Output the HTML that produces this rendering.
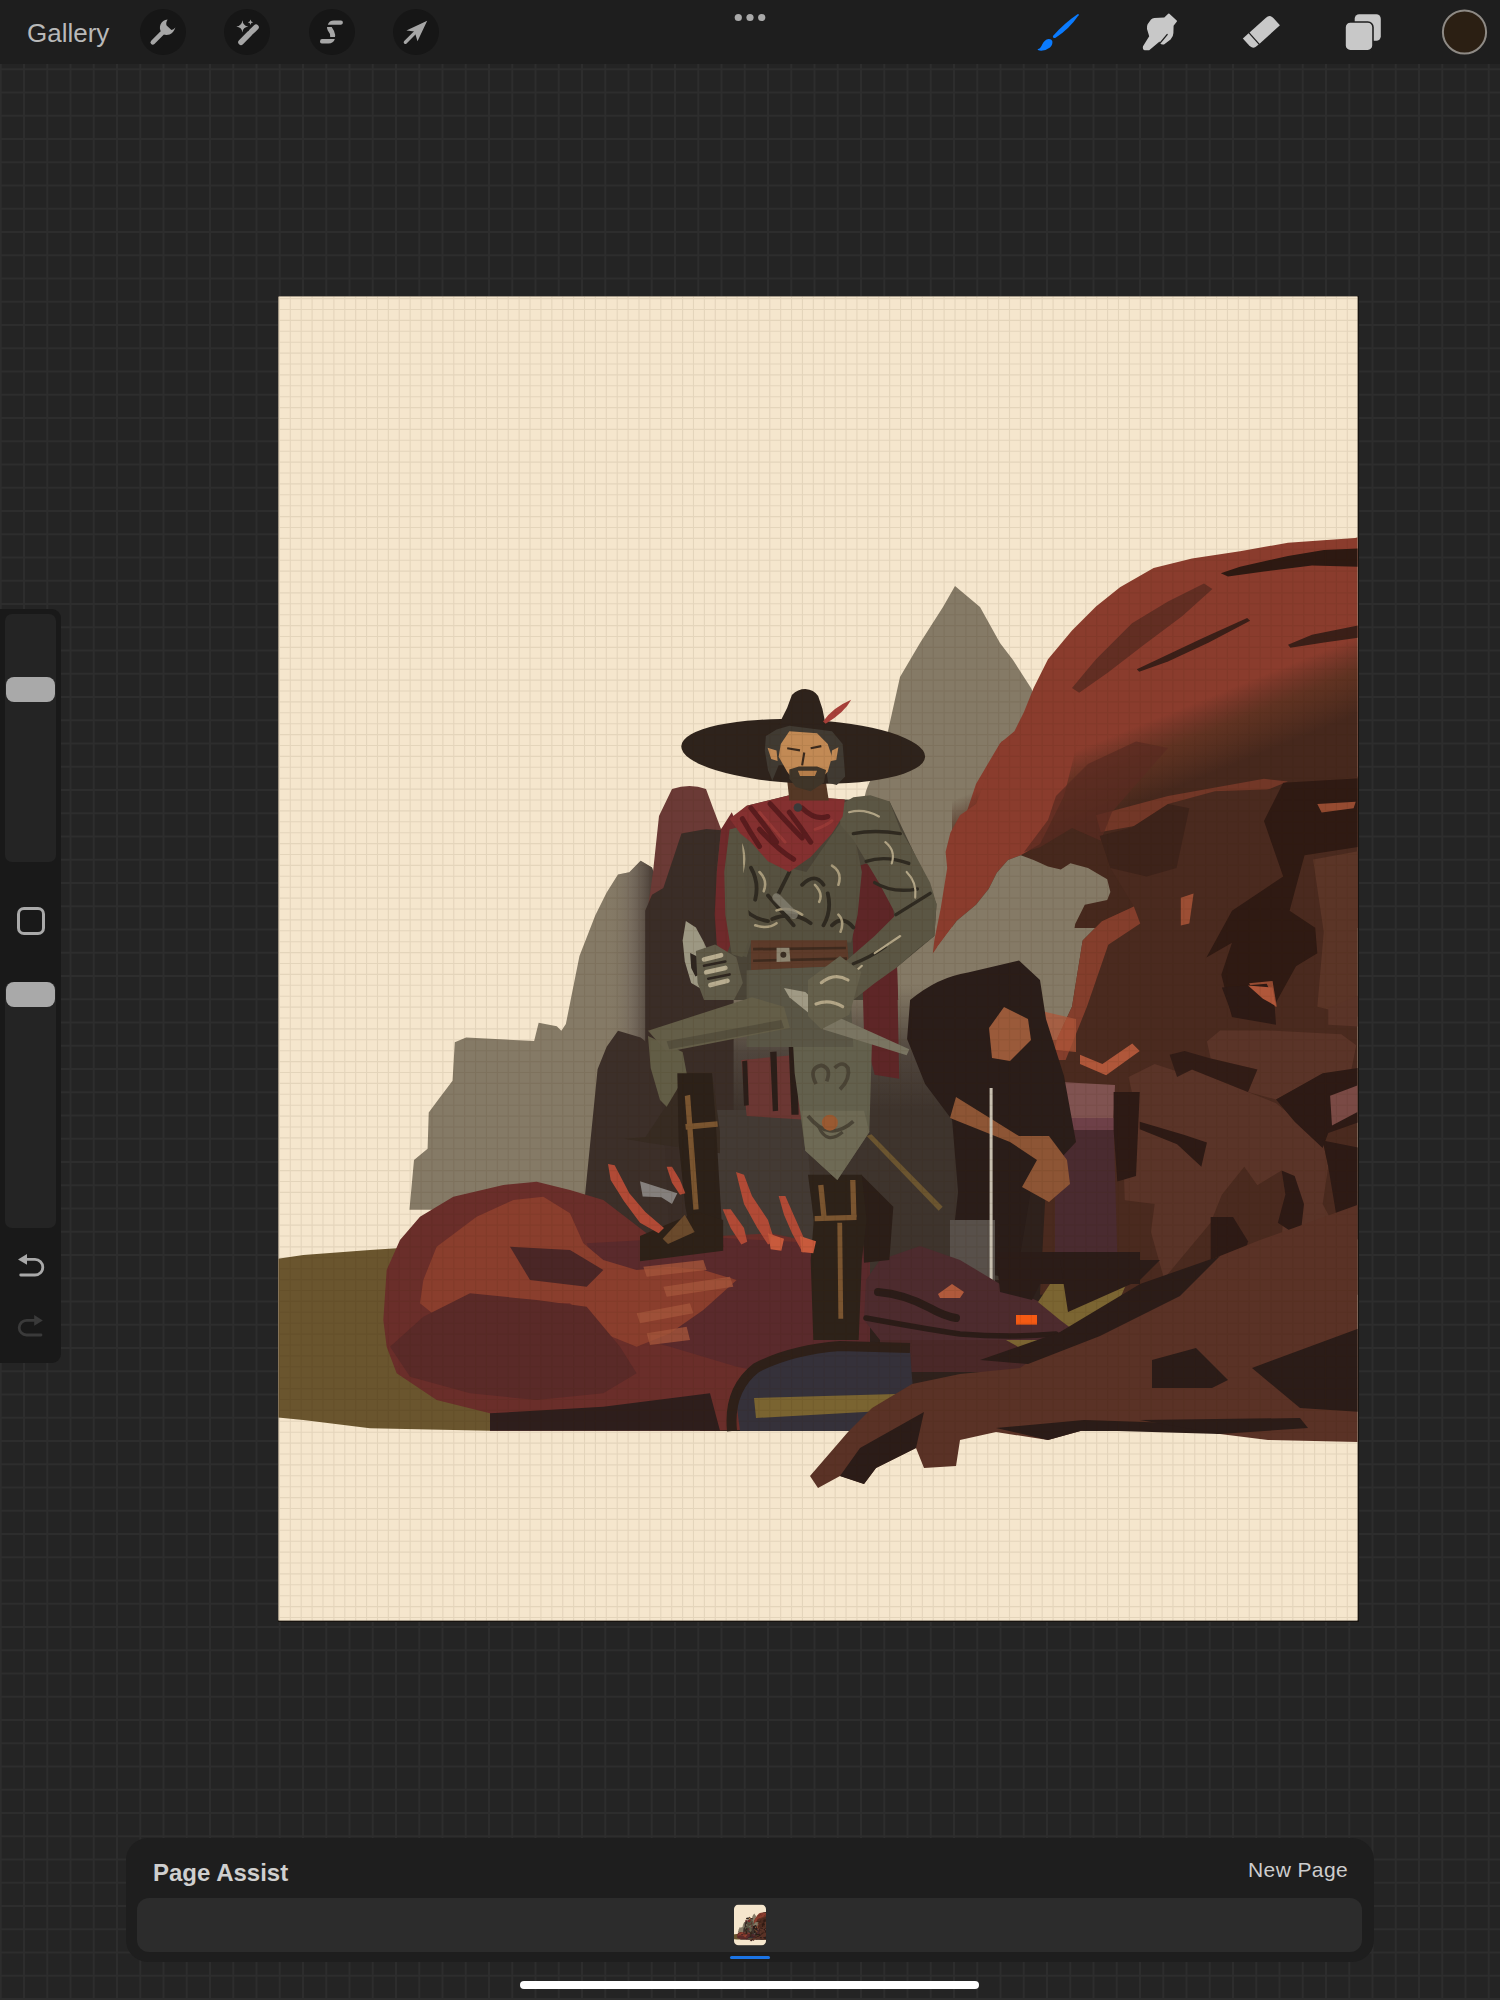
<!DOCTYPE html>
<html><head><meta charset="utf-8">
<style>
html,body{margin:0;padding:0;width:1500px;height:2000px;overflow:hidden;background:#242424;font-family:"Liberation Sans",sans-serif;}
.abs{position:absolute;}
#topbar{left:0;top:0;width:1500px;height:64px;background:#1e1e1e;}
#gallery{left:27px;top:17.5px;font-size:26px;color:#b9b9b9;line-height:30px;}
.circ{width:46px;height:46px;border-radius:50%;background:#161616;top:9px;}
#sidebar{left:0;top:609px;width:61px;height:754px;background:#191919;border-radius:0 9px 9px 0;}
.track{left:5px;width:51px;background:#242424;border-radius:7px;}
.thumb{left:6px;width:49px;height:25px;background:#a9a9a9;border-radius:8px;}
#panel{left:126px;top:1838px;width:1248px;height:124px;background:#1e1e1e;border-radius:22px;}
#strip{left:137px;top:1898px;width:1225px;height:54px;background:#2c2c2c;border-radius:12px;}
#pa{left:153px;top:1859px;font-size:24px;font-weight:bold;color:#cfcfcf;line-height:28px;}
#np{left:1248px;top:1858px;font-size:21px;color:#cdcdcd;line-height:24px;letter-spacing:0.4px;}
#home{left:520px;top:1981px;width:459px;height:8px;background:#fff;border-radius:4px;}
#uline{left:730px;top:1956px;width:40px;height:3px;background:#1b74e4;border-radius:1.5px;}
</style></head>
<body>
<svg class="abs" style="left:0;top:0" width="1500" height="2000" id="bggrid"><path d="M0.75 0V2000M24.00 0V2000M47.25 0V2000M70.50 0V2000M93.75 0V2000M117.00 0V2000M140.25 0V2000M163.50 0V2000M186.75 0V2000M210.00 0V2000M233.25 0V2000M256.50 0V2000M279.75 0V2000M303.00 0V2000M326.25 0V2000M349.50 0V2000M372.75 0V2000M396.00 0V2000M419.25 0V2000M442.50 0V2000M465.75 0V2000M489.00 0V2000M512.25 0V2000M535.50 0V2000M558.75 0V2000M582.00 0V2000M605.25 0V2000M628.50 0V2000M651.75 0V2000M675.00 0V2000M698.25 0V2000M721.50 0V2000M744.75 0V2000M768.00 0V2000M791.25 0V2000M814.50 0V2000M837.75 0V2000M861.00 0V2000M884.25 0V2000M907.50 0V2000M930.75 0V2000M954.00 0V2000M977.25 0V2000M1000.50 0V2000M1023.75 0V2000M1047.00 0V2000M1070.25 0V2000M1093.50 0V2000M1116.75 0V2000M1140.00 0V2000M1163.25 0V2000M1186.50 0V2000M1209.75 0V2000M1233.00 0V2000M1256.25 0V2000M1279.50 0V2000M1302.75 0V2000M1326.00 0V2000M1349.25 0V2000M1372.50 0V2000M1395.75 0V2000M1419.00 0V2000M1442.25 0V2000M1465.50 0V2000M1488.75 0V2000M0 -0.45H1500M0 22.80H1500M0 46.05H1500M0 69.30H1500M0 92.55H1500M0 115.80H1500M0 139.05H1500M0 162.30H1500M0 185.55H1500M0 208.80H1500M0 232.05H1500M0 255.30H1500M0 278.55H1500M0 301.80H1500M0 325.05H1500M0 348.30H1500M0 371.55H1500M0 394.80H1500M0 418.05H1500M0 441.30H1500M0 464.55H1500M0 487.80H1500M0 511.05H1500M0 534.30H1500M0 557.55H1500M0 580.80H1500M0 604.05H1500M0 627.30H1500M0 650.55H1500M0 673.80H1500M0 697.05H1500M0 720.30H1500M0 743.55H1500M0 766.80H1500M0 790.05H1500M0 813.30H1500M0 836.55H1500M0 859.80H1500M0 883.05H1500M0 906.30H1500M0 929.55H1500M0 952.80H1500M0 976.05H1500M0 999.30H1500M0 1022.55H1500M0 1045.80H1500M0 1069.05H1500M0 1092.30H1500M0 1115.55H1500M0 1138.80H1500M0 1162.05H1500M0 1185.30H1500M0 1208.55H1500M0 1231.80H1500M0 1255.05H1500M0 1278.30H1500M0 1301.55H1500M0 1324.80H1500M0 1348.05H1500M0 1371.30H1500M0 1394.55H1500M0 1417.80H1500M0 1441.05H1500M0 1464.30H1500M0 1487.55H1500M0 1510.80H1500M0 1534.05H1500M0 1557.30H1500M0 1580.55H1500M0 1603.80H1500M0 1627.05H1500M0 1650.30H1500M0 1673.55H1500M0 1696.80H1500M0 1720.05H1500M0 1743.30H1500M0 1766.55H1500M0 1789.80H1500M0 1813.05H1500M0 1836.30H1500M0 1859.55H1500M0 1882.80H1500M0 1906.05H1500M0 1929.30H1500M0 1952.55H1500M0 1975.80H1500M0 1999.05H1500" stroke="#2d2d2d" stroke-width="2" fill="none"/></svg>
<div id="topbar" class="abs"></div>
<div id="gallery" class="abs">Gallery</div>
<div class="abs circ" style="left:140px"></div>
<div class="abs circ" style="left:224px"></div>
<div class="abs circ" style="left:309px"></div>
<div class="abs circ" style="left:393px"></div>
<svg class="abs" style="left:0;top:0" width="1500" height="64">
<g fill="#a6a6a6">
 <!-- wrench -->
 <g transform="translate(140 9)">
  <line x1="12.8" y1="33.4" x2="22" y2="24.2" stroke="#a6a6a6" stroke-width="4.6" stroke-linecap="round"/>
  <path d="M27.6 10.6 Q22.5 11.2 20.5 15.5 Q19 19.5 21.2 23 L23.5 25.5 Q26.5 26.3 29.5 25.5 Q33.5 24 35.4 18.6 Q33.5 20.8 31.5 20.9 L26.6 16.5 Q25.5 14.2 27.6 10.6 Z"/>
 </g>
 <!-- wand -->
 <g transform="translate(224 9)">
  <line x1="17" y1="33.2" x2="25.6" y2="24.6" stroke="#a6a6a6" stroke-width="5.6" stroke-linecap="round"/>
  <line x1="27.6" y1="22.6" x2="32" y2="18.3" stroke="#a6a6a6" stroke-width="5.6" stroke-linecap="round"/>
  <path d="M18.4 11.2 Q19 16.8 24.3 17.5 Q19 18.2 18.4 23.4 Q17.8 18.2 12.3 17.5 Q17.8 16.8 18.4 11.2 Z"/>
  <path d="M26.5 10.6 Q26.8 13 29.2 13.3 Q26.8 13.6 26.5 16 Q26.2 13.6 23.8 13.3 Q26.2 13 26.5 10.6 Z"/>
 </g>
 <!-- selection S -->
 <g transform="translate(309 9)">
  <path d="M18.8 15.7 Q20 11.6 25 11.5 L32 11.5 Q33.9 11.6 33.9 13.6 Q33.9 15.7 32 15.7 Z"/>
  <path d="M18 18.1 L22.7 18.1 Q25.8 22.5 26.2 26 L26 27.9 L21.2 27.9 Q21.5 24.5 18.8 21.5 Q17.8 19.6 18 18.1 Z"/>
  <path d="M25.8 30.1 Q24.5 34.4 19.5 34.6 L12.8 34.6 Q11 34.5 11 32.4 Q11.1 30.1 13 30.1 Z"/>
 </g>
 <!-- arrow -->
 <g transform="translate(393 9)">
  <line x1="12.4" y1="33.2" x2="22" y2="23.6" stroke="#a6a6a6" stroke-width="3.4" stroke-linecap="round"/>
  <path d="M34.2 11.8 L13.4 21.4 L21.6 22.6 L24.5 32.3 Z"/>
 </g>
</g>
<circle cx="738.3" cy="17.5" r="3.6" fill="#a9a9a9"/>
<circle cx="750" cy="17.5" r="3.6" fill="#a9a9a9"/>
<circle cx="761.7" cy="17.5" r="3.6" fill="#a9a9a9"/>
<!-- brush -->
<g transform="translate(1030 8)" fill="#0a7bff">
 <path d="M23.2 29.6 Q22.4 28.8 23.4 27.6 Q34 15.5 47.5 6.3 Q49.2 5.5 48.6 7.2 Q39.5 20.6 25.6 29.8 Q24.2 30.5 23.2 29.6 Z"/>
 <path d="M7.8 41 Q10.5 40.8 12.3 36.2 Q14.5 31.8 18.5 31 Q21.5 30.8 22.3 33 Q23 36.5 20 39.6 Q15.5 43.2 9.5 42.6 Q7 42.2 7.8 41 Z"/>
</g>
<!-- smudge -->
<g transform="translate(1132 8)">
 <path fill="#c8c8c8" d="M11 38.2 Q10.2 41.8 13 42.3 L17.2 42.3 L27.6 33.6 L28.2 35.8 Q30 37 32 36.4 L38.6 31.6 Q41.4 28.5 41.4 25 L41.6 17.8 L44.9 13.6 Q45.2 13 44.7 12.5 L37.4 5.8 Q36.8 5.3 36.2 5.8 L32.3 9.6 L22.3 9.9 Q20.3 10 19 11.6 L15.6 16.3 Q14.6 18.3 15 21 L17.2 28.3 Z"/>
 <line x1="27.6" y1="35.6" x2="35.1" y2="26.6" stroke="#1e1e1e" stroke-width="1.4" stroke-linecap="round"/>
</g>
<!-- eraser -->
<g transform="translate(1261.4 31.9) rotate(-42)" fill="#c8c8c8">
 <path d="M-9.2 -7.5 L12.5 -7.5 Q18.2 -7.5 18.2 -2 L18.2 7.5 L-9.2 7.5 Z"/>
 <path d="M-10.5 -7.5 L-18.2 -7.5 L-18.2 2 Q-18.2 7.5 -12.5 7.5 L-10.5 7.5 Z"/>
</g>
<!-- layers -->
<rect x="1354.7" y="14.3" width="26.1" height="26.5" rx="4.5" fill="#c8c8c8"/>
<rect x="1345" y="22" width="28" height="28.7" rx="5.2" fill="#c8c8c8" stroke="#1e1e1e" stroke-width="1.6"/>
<!-- color -->
<circle cx="1464.5" cy="32" r="21.6" fill="#2b1f13" stroke="#8e8a85" stroke-width="2"/>
</svg>



<div class="abs" style="left:277.5px;top:295.5px;width:1081px;height:1326px;background:#17130f"></div>
<svg class="abs" style="left:0;top:0" width="1500" height="2000">
<defs><clipPath id="cv"><rect x="278.5" y="296.5" width="1079" height="1324"/></clipPath></defs>
<rect x="278.5" y="296.5" width="1079" height="1324" fill="#f5e6cd"/>
<g clip-path="url(#cv)">
<g id="paintg"><rect x="278.5" y="296.5" width="1079" height="1324" fill="#f5e6cd"/><defs>
 <linearGradient id="gDarkZone" gradientUnits="userSpaceOnUse" x1="0" y1="985" x2="0" y2="1110">
  <stop offset="0" stop-color="#857a66"/><stop offset="0.55" stop-color="#4f453d"/><stop offset="1" stop-color="#3e342d"/>
 </linearGradient>
 <linearGradient id="gLeftPeak" gradientUnits="userSpaceOnUse" x1="1000" y1="0" x2="1210" y2="0">
  <stop offset="0" stop-color="#857a66" stop-opacity="0"/><stop offset="0.5" stop-color="#6f645a" stop-opacity="0.6"/><stop offset="1" stop-color="#453a33"/>
 </linearGradient>
 <linearGradient id="gWingDark" gradientUnits="userSpaceOnUse" x1="970" y1="697" x2="1082" y2="975">
  <stop offset="0" stop-color="#4a2a20" stop-opacity="0"/><stop offset="0.45" stop-color="#55301f" stop-opacity="0.8"/><stop offset="1" stop-color="#46281d"/>
 </linearGradient>
</defs>

<!-- ========== tall grey peak (page coords) ========== -->
<path fill="#857a66" d="M955 586 L943 607 L920 643 L900 677 L886 740 L866 791 L850 860 L840 1000 L830 1100 L1112 1100 L1112 862 L1031 688 L1013 660 L1000 643 L980 607 Z"/>

<path fill="#2e211c" d="M700 1040 L1357 1040 L1357 1431 L700 1431 Z"/>
<!-- ========== left grey range, zoom [380,820,720,1200] ========== -->
<g transform="translate(380 820) scale(0.226667)">
 <path fill="#857a66" d="M1150 180 L1200 210 L1230 300 L1260 1500 L930 1720 L130 1720 L150 1500 L210 1450 L215 1290 L260 1230 L320 1150 L330 980 L380 960 L680 975 L700 895 L780 910 L800 930 L820 900 L840 800 L880 600 L950 420 L1000 320 L1050 240 L1100 230 Z"/>
 <path fill="url(#gLeftPeak)" d="M1150 180 L1200 210 L1230 300 L1260 1500 L1000 1500 L1000 320 L1050 240 L1100 230 Z"/>
</g>

<!-- ========== maroon rock + dark zone ========== -->
<path fill="#6b3a36" d="M672 789 Q690 783 706 789 L713 808 L721 829 L735 1000 L648 1000 L648.5 904 L653 872 L659 816 Z"/>
<path fill="url(#gDarkZone)" d="M700 985 L1000 985 L1010 1280 L690 1280 Z"/>
<g transform="translate(380 820) scale(0.226667)">
 <path fill="#3a2d27" d="M1330 60 L1440 40 L1560 50 L1560 1900 L1170 1900 L1170 400 L1200 330 L1250 300 L1300 150 Z"/>
 <path fill="#3c2f29" d="M1050 930 L1150 960 L1200 1000 L1250 1300 L1280 1900 L880 1900 L920 1500 L940 1300 L960 1100 L1000 1000 Z"/>
</g>
<path fill="#433a34" d="M712 1110 L805 1110 L815 1240 L712 1240 Z"/>

<!-- ========== wing, zoom [1000,520,1360,880] ========== -->
<g transform="translate(1000 520) scale(0.24)">
 <path fill="#8a3c2d" d="M1500 70 L1480 75 L1200 95 L1000 130 L800 160 L640 200 L500 280 L400 360 L300 460 L200 580 L140 700 L100 800 L60 880 L0 930 L-100 1100 L-200 1400 L200 1700 L1500 1700 Z"/>
 <path fill="url(#gWingDark)" d="M-200 1150 L1500 250 L1500 1700 L-200 1700 Z"/>
 <path fill="#2d1912" d="M920 222 L1000 195 L1200 150 L1350 125 L1500 118 L1500 195 L1300 190 L1100 215 L950 235 Z"/>
 <path fill="#5a2b22" opacity="0.85" d="M300 700 L400 580 L550 430 L700 340 L850 265 L885 288 L760 400 L600 520 L450 635 L330 720 Z"/>
 <path fill="#3a1f18" d="M570 622 L700 560 L850 490 L1030 408 L1042 420 L870 510 L700 590 L580 632 Z"/>
 <path fill="#3a1f18" d="M1200 520 L1300 478 L1500 438 L1500 490 L1350 510 L1210 532 Z"/>
 <path fill="#7d3b2b" opacity="0.8" d="M400 1230 L700 1150 L1100 1078 L1200 1090 L1000 1170 L700 1250 L420 1300 Z"/>
</g>

<!-- ========== wing tip + grey patch, zoom [880,700,1120,1010] ========== -->
<g transform="translate(880 700) scale(0.16)">
 <path fill="#8a3c2d" d="M940 -10 L900 120 L830 230 L760 260 L700 380 L650 520 L600 650 L500 720 L440 830 L410 950 L420 1050 L380 1300 L340 1500 L330 1585 L360 1540 L480 1380 L600 1280 L680 1180 L730 1080 L800 1000 L880 970 L1000 900 L1150 600 L1250 200 L1200 -10 Z"/>
 <path fill="#5a2b22" opacity="0.75" d="M1100 600 L1300 400 L1600 260 L1800 300 L1450 700 L1380 880 L1200 800 L1000 920 L900 950 L1050 750 Z"/>
 <path fill="#857a66" d="M880 970 L960 1000 L1050 1040 L1130 1060 L1190 1020 L1300 1050 L1420 1120 L1440 1200 L1420 1250 L1280 1280 L1220 1400 L1200 1520 L1170 1700 L1100 1800 L1050 1950 L300 1950 L360 1540 L480 1380 L600 1280 L680 1180 L730 1080 L800 1000 Z"/>
</g>

<!-- ========== body ========== -->
<g transform="translate(1040 740) scale(0.213333)">
 <path fill="#4a2a1f" d="M280 450 L430 410 L600 300 L820 240 L1100 230 L1500 170 L1500 2600 L0 2600 L60 1500 L80 1400 L150 1250 L200 940 L290 850 L440 780 L330 600 Z"/>
 <path fill="#8b402e" d="M150 1250 L200 940 L290 850 L440 780 L470 860 L320 960 L220 1250 L120 1500 L60 1500 L80 1400 Z" opacity="0.9"/>
 <path fill="#2f1a13" d="M1140 200 L1480 180 L1500 180 L1500 500 L1240 540 L1170 800 L1290 880 L1300 1000 L1200 1060 L1090 1260 L900 1300 L850 1100 L900 950 L780 1020 L900 800 L1140 640 L1050 380 Z"/>
 <path fill="#2f1a13" opacity="0.45" d="M280 450 L430 410 L600 300 L700 320 L640 600 L500 640 L330 600 Z"/>
 <path fill="#5b3527" d="M1280 560 L1500 520 L1500 1300 L1300 1250 L1330 900 Z"/>
 <path fill="#b0573a" d="M660 740 L720 720 L700 860 L660 870 Z" opacity="0.8"/>
 <path fill="#b0573a" d="M1300 300 L1480 290 L1470 320 L1320 340 Z" opacity="0.8"/>
 <path fill="#b0573a" d="M980 1140 L1090 1130 L1110 1250 L1040 1240 Z" opacity="0.8"/>
</g>
<g transform="translate(950 950) scale(0.3)">
 <path fill="#b0573a" opacity="0.75" d="M290 200 L420 230 L420 340 L320 330 Z"/>
 <path fill="#4a2b30" d="M350 560 L545 560 L560 1100 L350 1100 Z"/>
 <path fill="#8a5a5a" opacity="0.85" d="M370 440 L550 450 L545 560 L370 560 Z"/>
 <path fill="#6e4048" d="M340 560 L560 560 L560 600 L340 600 Z"/>
</g>
<!-- body lower right, zoom [1080,980,1360,1260] -->
<g transform="translate(1080 980) scale(0.186667)">
 <path fill="#5a3428" d="M680 330 L750 270 L1000 270 L1400 290 L1480 350 L1450 500 L1200 560 L1050 640 L900 600 L950 480 L700 420 Z"/>
 <path fill="#5a3428" d="M260 520 L400 450 L550 500 L600 480 L900 600 L1050 660 L1300 860 L1330 1000 L1300 1200 L1380 1350 L1250 1600 L900 1600 L1080 1380 L1100 1150 L1080 1020 L950 1100 L880 1000 L760 1150 L700 1300 L450 1600 L380 1350 L400 1200 L240 1180 L230 900 L300 700 Z"/>
 <path fill="#2d1a15" d="M180 600 L320 600 L300 1050 L200 1080 L180 800 Z"/>
 <path fill="#2d1a15" d="M320 760 L560 830 L680 870 L650 1000 L520 880 L320 800 Z"/>
 <path fill="#2d1a15" d="M1080 1020 L1150 1050 L1200 1200 L1180 1380 L1060 1300 L1100 1150 Z"/>
 <path fill="#2d1a15" d="M700 1270 L820 1270 L900 1400 L850 1600 L700 1600 Z"/>
 <path fill="#2d1a15" d="M1050 640 L1300 500 L1500 470 L1500 760 L1330 820 L1300 900 L1150 760 Z"/>
 <path fill="#7a4a45" d="M1340 620 L1500 560 L1500 700 L1350 780 Z"/>
 <path fill="#2d1a15" d="M1300 860 L1500 900 L1500 1400 L1380 1300 L1330 1000 Z"/>
 <path fill="#2d1a15" d="M760 40 L1000 20 L1040 100 L1050 240 L820 200 Z"/>
 <path fill="#b0573a" d="M900 30 L1030 40 L1050 140 L980 100 Z"/>
 <path fill="#b0573a" d="M0 400 L120 450 L280 340 L320 380 L140 510 L0 450 Z"/>
 <path fill="#5a3428" d="M1330 150 L1500 80 L1500 250 L1330 240 Z"/>
 <path fill="#2d1a15" d="M480 400 L560 380 L700 420 L950 480 L900 600 L600 480 L520 520 Z" opacity="0.85"/>
</g>
<!-- ========== hooded figure, zoom [950,950,1400,1400] ========== -->
<g transform="translate(950 950) scale(0.3)">
 <path fill="#2a1d19" d="M-133 167 Q-40 90 60 75 L230 35 L300 100 L320 230 L380 420 L420 640 L270 800 L220 1100 L0 1050 L27 807 L7 567 L-83 447 L-143 297 Z"/>
 <path fill="#9a5a3a" d="M180 190 L260 230 L270 300 L200 370 L140 360 L130 260 Z"/>
 <path fill="#8d5535" d="M20 490 L230 620 L330 620 L390 700 L400 780 L330 840 L240 790 L290 700 L200 640 L0 560 Z"/>
 <path fill="#58504a" d="M0 900 L150 900 L150 1130 L0 1130 Z"/>
 <rect x="132" y="460" width="10" height="670" fill="#c8c0b0"/>
</g>

<!-- ========== olive ground ========== -->
<g transform="translate(370 1160) scale(0.333333)">
 <path fill="#6a552e" d="M-300 300 L-200 285 L0 270 L80 265 L300 300 L400 700 L360 812 L0 805 L-200 780 L-300 770 Z"/>
</g>

<!-- ========== lower dragon, zoom [370,1160,870,1440] ========== -->
<g transform="translate(370 1160) scale(0.333333)">
 <path fill="#6a2e2a" d="M40 480 L50 330 L90 240 L150 170 L250 110 L400 75 L500 65 L600 90 L700 120 L830 220 L1000 230 L1200 220 L1350 250 L1500 260 L1500 800 L1020 812 L360 812 L360 760 L200 720 L80 640 L50 560 Z"/>
 <path fill="#5a2a2c" d="M650 250 L1000 230 L1350 250 L1500 260 L1500 700 L1100 620 L900 560 L750 520 Z"/>
 <path fill="#8a3e2d" d="M160 360 L200 260 L320 170 L430 120 L520 110 L600 160 L640 250 L700 300 L800 330 L900 320 L1000 330 L1100 360 L1000 450 L900 520 L800 560 L700 520 L600 430 L480 430 L330 470 L200 470 L150 430 Z"/>
 <g fill="#a4553b" opacity="0.8">
  <path d="M820 320 L1000 300 L1010 330 L830 350 Z"/>
  <path d="M880 380 L1080 350 L1090 380 L890 410 Z"/>
  <path d="M800 460 L960 430 L970 460 L810 490 Z"/>
  <path d="M830 520 L950 500 L960 540 L840 555 Z"/>
 </g>
 <path fill="#4a2626" d="M420 260 L600 270 L700 330 L650 380 L480 360 Z"/>
 <path fill="#5a2a28" d="M160 470 L300 400 L500 420 L650 440 L750 560 L800 640 L700 700 L500 720 L300 700 L120 650 L60 560 Z"/>
 <path fill="#2e1e1c" d="M360 760 L700 740 L1020 700 L1050 812 L360 812 Z"/>
</g>

<!-- ========== dragon head / pond, zoom [840,1180,1140,1440] ========== -->
<g transform="translate(840 1180) scale(0.2)">
 <path fill="#4d2b2e" d="M200 400 L400 330 L600 400 L800 520 L1000 610 L1130 680 L1180 760 L1100 800 L900 820 L600 830 L400 820 L200 800 L120 700 L130 500 Z"/>
 <path fill="#4a2828" d="M200 800 L1000 800 L1000 960 L200 960 Z"/>
 <path fill="#7b6532" d="M990 610 L1050 520 L1440 500 L1380 640 L1180 760 L1100 700 Z"/>
 <path fill="#7b6532" d="M830 800 L1080 800 L970 880 Z"/>
 <path fill="#2b1c18" d="M780 360 L1500 360 L1500 520 L1000 520 L960 600 L800 560 Z"/>
 <g fill="none" stroke="#2b1c18" stroke-linecap="round">
  <path stroke-width="28" d="M130 690 Q400 740 600 770 Q850 790 1080 770"/>
  <path stroke-width="40" d="M190 560 Q320 570 450 640 Q520 680 580 690"/>
 </g>
 <path fill="#b05a3c" d="M490 570 L560 520 L620 560 L600 590 L500 590 Z"/>
 <rect x="880" y="675" width="105" height="48" fill="#f55a14"/>
 <path fill="#35313a" d="M-500 1255 L-520 1100 L-460 960 L-300 880 L-100 850 L350 850 L380 1255 Z"/>
 <path fill="#7a6431" d="M-430 1090 L280 1070 L300 1150 L-420 1190 Z"/>
 <path fill="none" stroke="#2e2019" stroke-width="50" d="M-540 1255 Q-560 1050 -420 940 Q-250 850 0 830 L350 840"/>
</g>

<!-- ========== claw arm, zoom [780,1280,1380,1520] ========== -->
<g transform="translate(780 1280) scale(0.4)">
 <path fill="#5a3226" d="M170 380 L230 320 L330 260 L450 235 L600 220 L700 150 L800 80 L950 0 L1200 -100 L1450 -190 L1450 405 L1220 400 L1100 385 L1060 375 L760 375 L670 400 L540 380 L450 400 L440 465 L360 470 L340 420 L240 470 L210 510 L150 490 L95 520 L75 490 Z"/>
 <path fill="#2b1c18" d="M500 200 L700 130 L900 10 L1100 -60 L1000 40 L800 140 L620 210 Z"/>
 <path fill="#2b1c18" d="M150 490 L200 420 L360 330 L340 420 L240 470 L210 510 Z"/>
 <path fill="#2b1c18" d="M930 200 L1040 170 L1120 250 L1080 270 L930 270 Z"/>
 <path fill="#2b1c18" d="M1180 220 L1450 120 L1450 330 L1300 320 Z"/>
 <path fill="#2b1c18" d="M540 370 L760 350 L1060 360 L1100 385 L760 375 L670 400 Z"/>
 <path fill="#2b1c18" d="M700 -50 L950 -50 L900 0 L720 80 Z"/>
 <path fill="#2b1c18" d="M900 350 L1300 345 L1320 370 L1100 385 Z"/>
</g>
<!-- silhouette base -->
<g transform="translate(640 680) scale(0.213333)">
 <path fill="#4a4437" d="M380 700 L500 590 L700 540 L960 560 L1170 570 L1280 800 L1390 1050 L1380 1200 L1200 1350 L1210 1500 L410 1500 L360 1250 L360 900 Z"/>
</g>
<!-- ===== lower figure, zoom coords of [560,940,960,1340] ===== -->
<g transform="translate(560 940) scale(0.266667)">
 <!-- left big shin guard + flap -->
 <path fill="#372b22" d="M240 745 L320 740 L400 620 L470 500 L570 500 L600 720 L600 800 L330 760 Z"/>
 <path fill="#625d46" d="M330 360 L460 420 L475 500 L400 625 L375 600 L340 480 Z"/>
 <!-- left leg -->
 <path fill="#2c2119" d="M440 500 L570 500 L585 700 L612 1150 L500 1150 L470 1000 L445 760 Z"/>
 <path fill="#7a5530" d="M468 585 L488 580 L520 1010 L500 1012 Z"/>
 <path fill="#7a5530" d="M470 690 L590 680 L592 700 L472 712 Z"/>
 <!-- boot -->
 <path fill="#2d2118" d="M300 1110 L440 1050 L520 1020 L612 1050 L612 1165 L300 1205 Z"/>
 <path fill="#6a4a2c" d="M385 1120 L468 1030 L505 1095 L405 1140 Z"/>
 <!-- skirt -->
 <path fill="#6b3733" d="M680 450 L1000 420 L1010 680 L700 660 Z"/>
 <path fill="#2b1e19" d="M683 455 L702 452 L708 620 L690 622 Z"/>
 <path fill="#2b1e19" d="M788 420 L812 418 L818 640 L798 642 Z"/>
 <path fill="#2b1e19" d="M855 330 L888 330 L895 655 L868 655 Z"/>
 <!-- right cape -->
 <path fill="#5e2627" d="M1130 0 L1262 0 L1272 520 L1180 505 L1140 350 Z"/>
 <!-- right leg -->
 <path fill="#2b1e18" d="M1130 880 L1250 1000 L1235 1200 L1140 1210 Z"/>
 <path fill="#2d2219" d="M930 880 L1132 880 L1150 1050 L1132 1200 L1120 1500 L950 1500 L940 1200 L952 1050 Z"/>
 <path fill="#7a5530" d="M955 1035 L1112 1030 L1112 1050 L955 1055 Z"/>
 <path fill="#7a5530" d="M968 920 L988 918 L1000 1040 L980 1040 Z"/>
 <path fill="#7a5530" d="M1088 900 L1108 900 L1112 1040 L1092 1040 Z"/>
 <path fill="#7a5530" d="M1040 1060 L1058 1060 L1062 1420 L1044 1420 Z"/>
 <!-- tunic -->
 <path fill="#63604d" d="M870 320 L1170 380 L1160 720 L1040 900 L920 790 L900 640 L880 500 Z"/>
 <path fill="#6e6a55" d="M905 640 L1140 640 L1160 720 L1040 900 L920 790 Z"/>
 <path fill="none" stroke="#4a4436" stroke-width="14" d="M960 540 Q930 480 980 470 Q1020 480 1000 530 M1050 560 Q1090 520 1080 480 Q1060 450 1030 480 M930 660 Q1010 760 1100 680"/>
 <circle cx="1012" cy="685" r="30" fill="#9a5a32"/>
 <path fill="none" stroke="#4a4436" stroke-width="12" d="M970 700 Q1000 770 1060 720"/>
 <!-- sword -->
 <path fill="#6b5530" d="M1150 735 L1168 728 L1435 1000 L1420 1015 Z"/>
 <!-- grey bit -->
 <path fill="#85807d" d="M300 905 L440 950 L420 990 L380 965 L310 962 Z"/>
</g>
<!-- flames -->
<g transform="translate(560 940) scale(0.266667)" fill="#b14a36">
 <path d="M180 840 L205 845 L260 950 L320 1020 L390 1080 L370 1100 L300 1060 L240 980 L190 900 Z"/>
 <path d="M400 850 L420 850 L450 900 L470 950 L450 955 L420 910 Z"/>
 <path d="M660 870 L690 880 L720 960 L780 1050 L805 1130 L780 1142 L740 1080 L690 990 Z"/>
 <path d="M820 960 L845 960 L880 1040 L920 1130 L945 1160 L910 1172 L870 1100 L840 1030 Z"/>
 <path d="M610 1010 L640 1010 L690 1080 L702 1132 L680 1142 L640 1080 Z"/>
 <path fill="#c85a3c" d="M780 1100 L840 1120 L830 1165 L790 1160 Z M900 1110 L960 1130 L950 1175 L905 1170 Z"/>
</g>
<!-- ===== upper figure, zoom coords of [640,680,960,1000] ===== -->
<g transform="translate(640 680) scale(0.213333)">
 <!-- left cape -->
 <path fill="#6f2a2b" d="M430 620 L380 700 L360 900 L350 1100 L360 1240 L400 1300 L440 1200 L455 900 L475 720 Z"/>
 <!-- right cape -->
 <path fill="#5e2627" d="M1000 880 L1060 860 L1120 900 L1180 1000 L1200 1200 L1210 1500 L1060 1500 L1000 1300 L990 1000 Z"/>
 <!-- torso -->
 <path fill="#565140" d="M430 700 L480 680 L560 760 L700 880 L780 900 L960 640 L1000 700 L1040 900 L1020 1100 L990 1230 L520 1230 L500 1300 L430 1280 L420 1200 L410 1000 L420 850 Z"/>
 <!-- armour detail -->
 <g fill="none" stroke-linecap="round" stroke-linejoin="round">
  <path stroke="#2f2a21" stroke-width="18" d="M600 1010 L720 1150 M520 880 Q560 950 540 1030 M880 1000 Q900 1080 860 1150 M620 1120 Q720 1080 800 1140 M700 900 L650 1000 M470 1050 Q520 1120 600 1130 M900 1150 Q950 1100 1000 1160 M760 960 Q820 900 860 960"/>
  <path stroke="#a99c7c" stroke-width="12" d="M560 900 Q600 940 580 990 M900 870 Q950 900 930 960 M640 1080 Q700 1060 760 1100 M470 760 Q500 820 480 900 M820 960 Q860 1000 840 1040 M540 1150 Q600 1170 640 1140 M930 1100 Q960 1130 940 1180"/>
  <path stroke="#8a8678" stroke-width="40" d="M640 1020 L720 1100" opacity="0.7"/>
 </g>
 <!-- belt -->
 <path fill="#5d3b2a" d="M520 1220 L970 1220 L980 1340 L520 1360 Z"/>
 <path fill="#3e2a1e" d="M530 1255 L965 1250 L965 1262 L530 1268 Z M530 1310 L970 1300 L970 1312 L530 1322 Z"/>
 <path fill="#8d8470" d="M640 1255 L700 1255 L705 1320 L640 1322 Z"/>
 <circle cx="672" cy="1288" r="14" fill="#3a2e24"/>
 <!-- lower tunic -->
 <path fill="#5a5646" d="M500 1360 L980 1340 L1000 1720 L500 1720 Z"/>
 <!-- left arm & fist -->
 <path fill="#585341" d="M420 700 L475 690 L485 900 L505 1050 L520 1200 L480 1300 L430 1285 L400 1100 L395 900 Z"/>
 <path fill="#9d9883" d="M215 1130 L262 1160 L300 1230 L330 1300 L320 1400 L290 1450 L240 1420 L210 1320 L200 1220 Z"/>
 <path fill="#2e2620" d="M235 1280 L275 1300 L270 1340 L300 1370 L260 1390 L240 1350 Z"/>
 <path fill="#5f5a48" d="M262 1270 L352 1240 L452 1300 L482 1420 L440 1500 L300 1500 L270 1420 Z"/>
 <g fill="none" stroke-linecap="round">
  <path stroke="#b8ad90" stroke-width="22" d="M300 1310 L380 1290 M310 1370 L400 1350 M330 1430 L410 1410"/>
  <path stroke="#2e2620" stroke-width="12" d="M300 1340 L400 1320 M320 1400 L420 1380"/>
 </g>
 <!-- right pauldron & arm -->
 <path fill="#5b5644" d="M930 590 L1000 550 L1080 540 L1170 570 L1220 700 L1280 800 L1360 950 L1390 1050 L1380 1200 L1300 1262 L1200 1350 L1100 1422 L1000 1500 L830 1500 L850 1400 L950 1330 L1100 1200 L1200 1100 L1120 950 L1060 850 L1000 750 L940 680 Z"/>
 <g fill="none" stroke-linecap="round">
  <path stroke="#2f2a21" stroke-width="16" d="M1000 720 Q1100 700 1220 720 M1060 850 Q1150 820 1260 860 M1200 1100 Q1280 1050 1360 1000 M1000 1330 Q1080 1300 1150 1250 M1100 950 Q1180 1000 1300 980"/>
  <path stroke="#b3a687" stroke-width="10" d="M980 620 Q1050 600 1120 640 M1150 760 Q1200 800 1180 860 M1250 900 Q1300 950 1290 1020 M1100 1280 Q1160 1240 1220 1200 M950 1400 Q1000 1380 1040 1340"/>
 </g>
 <!-- scarf -->
 <path fill="#843030" d="M420 650 L500 590 L620 560 L700 540 L960 560 L950 640 L900 720 L800 830 L700 900 L600 850 L520 760 L470 720 Z"/>
 <g fill="none" stroke="#5a1c1e" stroke-linecap="round">
  <path stroke-width="24" d="M520 600 Q600 700 640 760 M610 580 Q700 680 760 740 M560 700 Q650 800 720 840 M760 600 Q820 660 880 640 M480 650 Q520 720 560 780 M700 620 Q760 700 800 760"/>
  <path stroke="#9c3c38" stroke-width="14" d="M560 620 Q620 690 680 760 M820 700 Q860 690 900 660" opacity="0.8"/>
 </g>
 <!-- neck -->
 <path fill="#553826" d="M690 470 L870 470 L885 565 L700 565 Z"/>
 <circle cx="740" cy="598" r="20" fill="#3a3a3a"/>
 <!-- hat -->
 <ellipse cx="765" cy="335" rx="572" ry="150" fill="#2e231c" transform="rotate(2.5 765 335)"/>
 <path fill="#2e231c" d="M650 210 L690 130 L712 70 Q740 42 775 42 Q815 45 835 75 L855 135 L870 210 Z"/>
 <path fill="#a8403a" d="M858 195 Q900 130 990 92 Q960 150 870 205 Z"/>
 <!-- hair -->
 <path fill="#403a32" d="M590 262 L640 232 L700 215 L900 240 L950 300 L962 452 L922 492 L882 482 L870 400 L650 400 L620 472 L600 422 L585 330 Z"/>
 <!-- face -->
 <path fill="#c28a55" d="M660 300 L700 240 L830 250 L880 300 L900 360 L880 430 L840 470 L720 470 L690 430 L650 360 Z"/>
 <path fill="#c28a55" d="M598 318 L640 330 L645 380 L615 370 Z M900 330 L930 315 L920 375 L895 380 Z"/>
 <path fill="none" stroke="#3a2a1e" stroke-width="10" d="M690 320 L750 330 M800 320 L850 310 M770 340 L760 400"/>
 <!-- beard -->
 <path fill="#3f3529" d="M700 420 L745 405 L830 405 L872 422 L862 482 L800 522 L730 502 L700 462 Z"/>
 <path fill="#b57d4a" d="M740 425 L830 425 L820 450 L750 450 Z"/>
</g>
<!-- ===== front items, zoom coords of [560,940,960,1340] ===== -->
<g transform="translate(560 940) scale(0.266667)">
 <!-- big horizontal blade / scabbard -->
 <path fill="#645e48" d="M330 340 L720 215 L840 250 L862 330 L400 420 Z"/>
 <path fill="#4e4839" d="M400 380 L830 300 L840 330 L410 410 Z" opacity="0.7"/>
 <path fill="#5f5a48" d="M700 120 L1000 110 L1010 300 L850 330 L700 300 Z" opacity="0"/>
 <path fill="#7a7562" d="M1000 270 L1310 410 L1300 432 L985 335 Z"/>
 <path fill="#a09a85" d="M840 180 L920 195 L1005 275 L990 320 L860 215 Z"/>
 <path fill="#65604c" d="M930 150 L1050 60 L1130 120 L1085 280 L980 335 L930 285 Z"/>
 <path fill="none" stroke="#b3a687" stroke-width="12" stroke-linecap="round" d="M980 160 Q1030 120 1080 150 M960 240 Q1010 220 1060 250"/>
</g>
</g>
</g>
<path d="M279.40 296.5V1620.5M290.30 296.5V1620.5M301.20 296.5V1620.5M312.09 296.5V1620.5M322.99 296.5V1620.5M333.89 296.5V1620.5M344.79 296.5V1620.5M355.68 296.5V1620.5M366.58 296.5V1620.5M377.48 296.5V1620.5M388.37 296.5V1620.5M399.27 296.5V1620.5M410.17 296.5V1620.5M421.06 296.5V1620.5M431.96 296.5V1620.5M442.86 296.5V1620.5M453.75 296.5V1620.5M464.65 296.5V1620.5M475.55 296.5V1620.5M486.45 296.5V1620.5M497.34 296.5V1620.5M508.24 296.5V1620.5M519.14 296.5V1620.5M530.03 296.5V1620.5M540.93 296.5V1620.5M551.83 296.5V1620.5M562.73 296.5V1620.5M573.62 296.5V1620.5M584.52 296.5V1620.5M595.42 296.5V1620.5M606.31 296.5V1620.5M617.21 296.5V1620.5M628.11 296.5V1620.5M639.00 296.5V1620.5M649.90 296.5V1620.5M660.80 296.5V1620.5M671.69 296.5V1620.5M682.59 296.5V1620.5M693.49 296.5V1620.5M704.39 296.5V1620.5M715.28 296.5V1620.5M726.18 296.5V1620.5M737.08 296.5V1620.5M747.97 296.5V1620.5M758.87 296.5V1620.5M769.77 296.5V1620.5M780.66 296.5V1620.5M791.56 296.5V1620.5M802.46 296.5V1620.5M813.36 296.5V1620.5M824.25 296.5V1620.5M835.15 296.5V1620.5M846.05 296.5V1620.5M856.94 296.5V1620.5M867.84 296.5V1620.5M878.74 296.5V1620.5M889.63 296.5V1620.5M900.53 296.5V1620.5M911.43 296.5V1620.5M922.33 296.5V1620.5M933.22 296.5V1620.5M944.12 296.5V1620.5M955.02 296.5V1620.5M965.91 296.5V1620.5M976.81 296.5V1620.5M987.71 296.5V1620.5M998.61 296.5V1620.5M1009.50 296.5V1620.5M1020.40 296.5V1620.5M1031.30 296.5V1620.5M1042.19 296.5V1620.5M1053.09 296.5V1620.5M1063.99 296.5V1620.5M1074.88 296.5V1620.5M1085.78 296.5V1620.5M1096.68 296.5V1620.5M1107.58 296.5V1620.5M1118.47 296.5V1620.5M1129.37 296.5V1620.5M1140.27 296.5V1620.5M1151.16 296.5V1620.5M1162.06 296.5V1620.5M1172.96 296.5V1620.5M1183.85 296.5V1620.5M1194.75 296.5V1620.5M1205.65 296.5V1620.5M1216.55 296.5V1620.5M1227.44 296.5V1620.5M1238.34 296.5V1620.5M1249.24 296.5V1620.5M1260.13 296.5V1620.5M1271.03 296.5V1620.5M1281.93 296.5V1620.5M1292.82 296.5V1620.5M1303.72 296.5V1620.5M1314.62 296.5V1620.5M1325.51 296.5V1620.5M1336.41 296.5V1620.5M1347.31 296.5V1620.5M278.5 298.60H1357.5M278.5 309.50H1357.5M278.5 320.40H1357.5M278.5 331.30H1357.5M278.5 342.20H1357.5M278.5 353.10H1357.5M278.5 364.00H1357.5M278.5 374.90H1357.5M278.5 385.80H1357.5M278.5 396.70H1357.5M278.5 407.60H1357.5M278.5 418.50H1357.5M278.5 429.40H1357.5M278.5 440.30H1357.5M278.5 451.20H1357.5M278.5 462.10H1357.5M278.5 473.00H1357.5M278.5 483.90H1357.5M278.5 494.80H1357.5M278.5 505.70H1357.5M278.5 516.60H1357.5M278.5 527.50H1357.5M278.5 538.40H1357.5M278.5 549.30H1357.5M278.5 560.20H1357.5M278.5 571.10H1357.5M278.5 582.00H1357.5M278.5 592.90H1357.5M278.5 603.80H1357.5M278.5 614.70H1357.5M278.5 625.60H1357.5M278.5 636.50H1357.5M278.5 647.40H1357.5M278.5 658.30H1357.5M278.5 669.20H1357.5M278.5 680.10H1357.5M278.5 691.00H1357.5M278.5 701.90H1357.5M278.5 712.80H1357.5M278.5 723.70H1357.5M278.5 734.60H1357.5M278.5 745.50H1357.5M278.5 756.40H1357.5M278.5 767.30H1357.5M278.5 778.20H1357.5M278.5 789.10H1357.5M278.5 800.00H1357.5M278.5 810.90H1357.5M278.5 821.80H1357.5M278.5 832.70H1357.5M278.5 843.60H1357.5M278.5 854.50H1357.5M278.5 865.40H1357.5M278.5 876.30H1357.5M278.5 887.20H1357.5M278.5 898.10H1357.5M278.5 909.00H1357.5M278.5 919.90H1357.5M278.5 930.80H1357.5M278.5 941.70H1357.5M278.5 952.60H1357.5M278.5 963.50H1357.5M278.5 974.40H1357.5M278.5 985.30H1357.5M278.5 996.20H1357.5M278.5 1007.10H1357.5M278.5 1018.00H1357.5M278.5 1028.90H1357.5M278.5 1039.80H1357.5M278.5 1050.70H1357.5M278.5 1061.60H1357.5M278.5 1072.50H1357.5M278.5 1083.40H1357.5M278.5 1094.30H1357.5M278.5 1105.20H1357.5M278.5 1116.10H1357.5M278.5 1127.00H1357.5M278.5 1137.90H1357.5M278.5 1148.80H1357.5M278.5 1159.70H1357.5M278.5 1170.60H1357.5M278.5 1181.50H1357.5M278.5 1192.40H1357.5M278.5 1203.30H1357.5M278.5 1214.20H1357.5M278.5 1225.10H1357.5M278.5 1236.00H1357.5M278.5 1246.90H1357.5M278.5 1257.80H1357.5M278.5 1268.70H1357.5M278.5 1279.60H1357.5M278.5 1290.50H1357.5M278.5 1301.40H1357.5M278.5 1312.30H1357.5M278.5 1323.20H1357.5M278.5 1334.10H1357.5M278.5 1345.00H1357.5M278.5 1355.90H1357.5M278.5 1366.80H1357.5M278.5 1377.70H1357.5M278.5 1388.60H1357.5M278.5 1399.50H1357.5M278.5 1410.40H1357.5M278.5 1421.30H1357.5M278.5 1432.20H1357.5M278.5 1443.10H1357.5M278.5 1454.00H1357.5M278.5 1464.90H1357.5M278.5 1475.80H1357.5M278.5 1486.70H1357.5M278.5 1497.60H1357.5M278.5 1508.50H1357.5M278.5 1519.40H1357.5M278.5 1530.30H1357.5M278.5 1541.20H1357.5M278.5 1552.10H1357.5M278.5 1563.00H1357.5M278.5 1573.90H1357.5M278.5 1584.80H1357.5M278.5 1595.70H1357.5M278.5 1606.60H1357.5M278.5 1617.50H1357.5" stroke="#3a2800" stroke-opacity="0.085" stroke-width="1.1" fill="none"/>
</svg>
<div id="sidebar" class="abs"></div>
<svg class="abs" style="left:0;top:1240px" width="61" height="110">
 <path d="M27 14 L18 19.4 L27 24.8 Z" fill="#a9a9a9"/>
 <path d="M26 19.4 L35 19.4 A7.8 7.8 0 0 1 35 35 L20.7 35" fill="none" stroke="#a9a9a9" stroke-width="2.8" stroke-linecap="round"/>
 <path d="M34.2 75 L42.8 80.4 L34.2 85.8 Z" fill="#3a3a3a"/>
 <path d="M35 80.4 L26.5 80.4 A7.3 7.3 0 0 0 26.5 95 L41 95" fill="none" stroke="#3a3a3a" stroke-width="2.8" stroke-linecap="round"/>
</svg>

<div class="abs track" style="top:614px;height:248px"></div>
<div class="abs thumb" style="top:677px"></div>
<div class="abs" style="left:17px;top:907px;width:22px;height:22px;border:3px solid #a9a9a9;border-radius:7px"></div>
<div class="abs track" style="top:982px;height:246px"></div>
<div class="abs thumb" style="top:982px"></div>

<div id="panel" class="abs"></div>
<div id="strip" class="abs"></div>
<svg class="abs" style="left:0;top:1890px" width="1500" height="70">
<defs><clipPath id="thc"><rect x="734" y="14.6" width="32" height="40.8" rx="4.5"/></clipPath></defs>
<g clip-path="url(#thc)"><g transform="translate(734 14.6) scale(0.029657 0.030816) translate(-278.5 -296.5)"><use href="#paintg"/></g></g>
</svg>

<div id="pa" class="abs">Page Assist</div>
<div id="np" class="abs">New Page</div>
<div id="uline" class="abs"></div>
<div id="home" class="abs"></div>
</body></html>
